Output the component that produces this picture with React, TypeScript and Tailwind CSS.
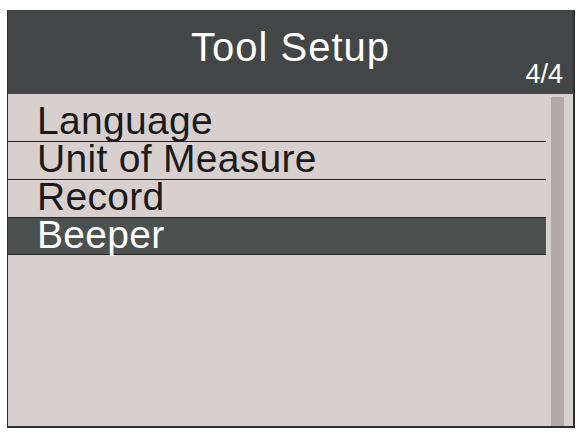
const items = ['Language', 'Unit of Measure', 'Record', 'Beeper'];
const selected = 3;

export default function App() {
  return (
    <div className="w-[583px] h-[433px] bg-white pt-[10px] pl-[7px]" style={{ fontFamily: '"Liberation Sans", Arial, sans-serif' }}>
      <div className="w-[568px] h-[418px] flex flex-col bg-[#d8d0ce] border-r-2 border-b-2 border-l border-[#2e3030]">
        <div className="h-[84px] bg-[#424647] text-white shrink-0">
          <div className="pt-[17px] text-center text-[40px] leading-[40px] tracking-[1px]">Tool Setup</div>
          <div className="-mt-[6px] pr-[10px] text-right text-[27px] leading-[27px]">4/4</div>
        </div>
        <div className="flex flex-1 min-h-0">
          <div className="w-[538px] pt-[10px]">
            {items.map((item, i) => (
              <div
                key={item}
                className={
                  i === selected
                    ? 'h-[38px] pl-[29px] pb-[4px] leading-[33px] text-[39px] tracking-[0.3px] bg-[#4a514e] text-white border-b border-t border-[#222] -mt-px'
                    : 'h-[38px] pl-[29px] pb-[4px] leading-[33px] text-[39px] tracking-[0.3px] text-[#1a1a1a] border-b border-[#222]'
                }
              >
                {item}
              </div>
            ))}
          </div>
          <div className="ml-[5px] mt-[3px] w-[13px] bg-[#b0a9a7]" />
        </div>
      </div>
    </div>
  );
}
